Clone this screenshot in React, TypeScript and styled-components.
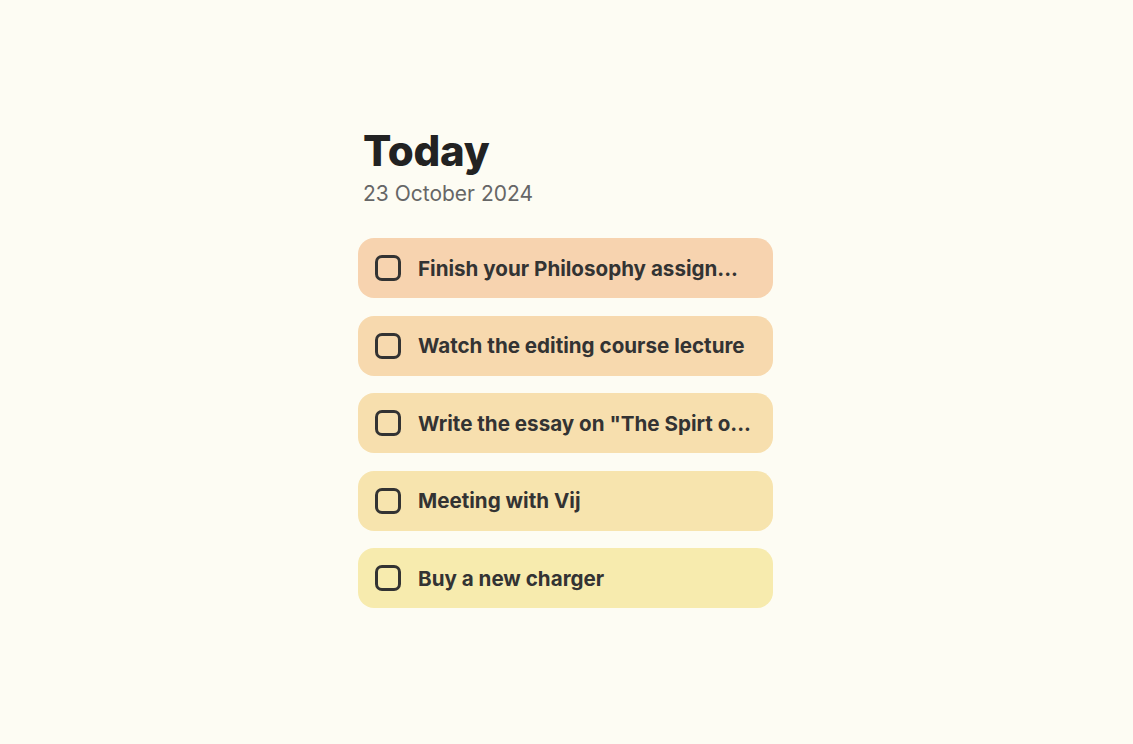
import styled, { createGlobalStyle } from 'styled-components'

const GlobalStyle = createGlobalStyle`
    html, body {
        margin: 0;
        padding: 0;
        background-color: #FDFCF3;
        font-family: Inter, "Noto Sans", sans-serif;
    }
`

const Page = styled.main`
    min-height: 744px;
    display: flex;
    align-items: center;
    justify-content: center;
`

const Column = styled.section`
    width: 415px;
    display: flex;
    flex-direction: column;
    margin: -10px 2px 0 0;
`

const Header = styled.header`
    padding-left: 5px;
    margin-bottom: 32px;
`

const Title = styled.h1`
    margin: 0;
    font-size: 42px;
    font-weight: 800;
    letter-spacing: -0.3px;
    line-height: 50px;
    color: #222222;
`

const DateLine = styled.p`
    margin: 6px 0 0;
    font-size: 21px;
    font-weight: 400;
    line-height: 24px;
    color: #666666;
`

const List = styled.ul`
    list-style: none;
    margin: 0;
    padding: 0;
    display: flex;
    flex-direction: column;
    gap: 17.5px;
`

const Item = styled.li<{ $bg: string }>`
    height: 60px;
    box-sizing: border-box;
    padding: 0 20px 0 17px;
    border-radius: 16px;
    background-color: ${p => p.$bg};
    display: flex;
    align-items: center;
    gap: 17px;
`

const Box = styled.span`
    flex: none;
    width: 26px;
    height: 26px;
    box-sizing: border-box;
    border: 3px solid #333333;
    border-radius: 7px;
`

const Label = styled.span`
    font-size: 20.6px;
    font-weight: 700;
    color: #333333;
    white-space: nowrap;
`

const tasks = [
    { text: 'Finish your Philosophy assign...', bg: '#F7D3AF' },
    { text: 'Watch the editing course lecture', bg: '#F7D9AE' },
    { text: 'Write the essay on "The Spirt o...', bg: '#F7DFAE' },
    { text: 'Meeting with Vij', bg: '#F7E4AE' },
    { text: 'Buy a new charger', bg: '#F7EBAE' },
]

export default function App() {
    return (
        <>
            <GlobalStyle />
            <Page>
                <Column>
                    <Header>
                        <Title>Today</Title>
                        <DateLine>23 October 2024</DateLine>
                    </Header>
                    <List>
                        {tasks.map(t => (
                            <Item key={t.text} $bg={t.bg}>
                                <Box />
                                <Label>{t.text}</Label>
                            </Item>
                        ))}
                    </List>
                </Column>
            </Page>
        </>
    )
}
